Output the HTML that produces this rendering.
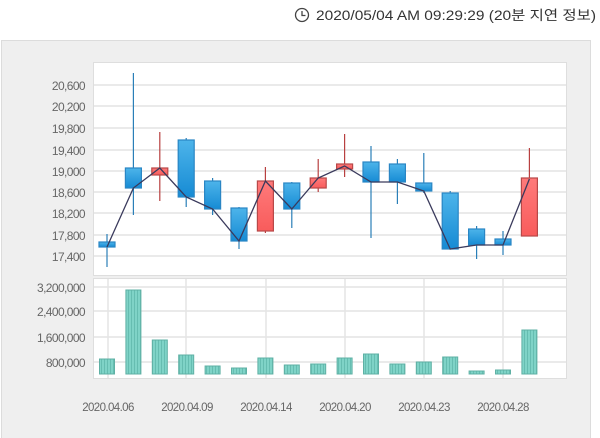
<!DOCTYPE html>
<html><head><meta charset="utf-8"><style>
html,body{margin:0;padding:0;background:#fff;width:600px;height:438px;overflow:hidden}
svg{display:block}
text{font-family:"Liberation Sans","Noto Sans CJK KR",sans-serif}
</style></head><body>
<svg width="600" height="438" viewBox="0 0 600 438" xmlns="http://www.w3.org/2000/svg">
<defs>
<linearGradient id="bl" x1="0" y1="0" x2="0" y2="1"><stop offset="0" stop-color="#4db4ea"/><stop offset="1" stop-color="#168bd4"/></linearGradient>
<linearGradient id="rd" x1="0" y1="0" x2="0" y2="1"><stop offset="0" stop-color="#ff7a7a"/><stop offset="1" stop-color="#f85c5c"/></linearGradient>
<pattern id="vp" width="3" height="4" patternUnits="userSpaceOnUse"><rect width="3" height="4" fill="#7fd3c7"/><rect x="2" width="1" height="4" fill="#66bdb1"/></pattern>
</defs>
<circle cx="302" cy="15" r="6.5" fill="none" stroke="#444" stroke-width="1.3"/>
<path d="M302 11v4.5h3.5" fill="none" stroke="#444" stroke-width="1.3"/>
<text x="316" y="20" font-size="13.5" fill="#333" textLength="280" lengthAdjust="spacingAndGlyphs">2020/05/04 AM 09:29:29 (20분 지연 정보)</text>
<rect x="1.5" y="40.5" width="589" height="400" fill="#efefef" stroke="#dcdcdc"/>
<rect x="93.5" y="62.5" width="473" height="213" fill="#fff" stroke="#dedede"/>
<rect x="93.5" y="278.5" width="473" height="100" fill="#fff" stroke="#dedede"/>
<g stroke="#e4e4e4" stroke-width="1.5">
<line x1="94" x2="566" y1="85" y2="85"/><line x1="94" x2="566" y1="106" y2="106"/><line x1="94" x2="566" y1="128" y2="128"/><line x1="94" x2="566" y1="150" y2="150"/><line x1="94" x2="566" y1="171" y2="171"/><line x1="94" x2="566" y1="192" y2="192"/><line x1="94" x2="566" y1="213" y2="213"/><line x1="94" x2="566" y1="235" y2="235"/><line x1="94" x2="566" y1="256" y2="256"/>
<line x1="94" x2="566" y1="287" y2="287"/><line x1="94" x2="566" y1="311" y2="311"/><line x1="94" x2="566" y1="337" y2="337"/><line x1="94" x2="566" y1="362" y2="362"/>
<line x1="108" x2="108" y1="279" y2="378"/><line x1="186" x2="186" y1="279" y2="378"/><line x1="266" x2="266" y1="279" y2="378"/><line x1="345" x2="345" y1="279" y2="378"/><line x1="424" x2="424" y1="279" y2="378"/><line x1="503" x2="503" y1="279" y2="378"/>
</g>
<g font-size="12" fill="#666" text-anchor="end" letter-spacing="-0.6">
<text x="85" y="90">20,600</text><text x="85" y="111">20,200</text><text x="85" y="133">19,800</text><text x="85" y="155">19,400</text><text x="85" y="176">19,000</text><text x="85" y="197">18,600</text><text x="85" y="218">18,200</text><text x="85" y="240">17,800</text><text x="85" y="261">17,400</text>
<text x="85" y="292">3,200,000</text><text x="85" y="316">2,400,000</text><text x="85" y="342">1,600,000</text><text x="85" y="367">800,000</text>
</g>
<g font-size="11.5" fill="#666" text-anchor="middle" letter-spacing="-0.6">
<text x="108" y="411">2020.04.06</text><text x="187" y="411">2020.04.09</text><text x="266" y="411">2020.04.14</text><text x="345" y="411">2020.04.20</text><text x="424" y="411">2020.04.23</text><text x="503" y="411">2020.04.28</text>
</g>
<g stroke-width="1.2">
<g stroke="#2a7fb8">
<line x1="107" x2="107" y1="234" y2="267"/><line x1="133.4" x2="133.4" y1="73" y2="215"/><line x1="186.2" x2="186.2" y1="138" y2="207"/><line x1="212.6" x2="212.6" y1="178" y2="215"/><line x1="239" x2="239" y1="207" y2="249"/><line x1="291.8" x2="291.8" y1="182" y2="228"/><line x1="371" x2="371" y1="146" y2="238"/><line x1="397.4" x2="397.4" y1="159" y2="204"/><line x1="423.8" x2="423.8" y1="153" y2="193"/><line x1="450.2" x2="450.2" y1="191" y2="249"/><line x1="476.6" x2="476.6" y1="226" y2="259"/><line x1="503" x2="503" y1="231" y2="255"/>
</g>
<g stroke="#b84040">
<line x1="159.8" x2="159.8" y1="132" y2="201"/><line x1="265.4" x2="265.4" y1="167" y2="233"/><line x1="318.2" x2="318.2" y1="159" y2="192"/><line x1="344.6" x2="344.6" y1="134" y2="177"/><line x1="529.4" x2="529.4" y1="148" y2="236"/>
</g>
<g fill="url(#bl)" stroke="#2a86c4">
<rect x="99" y="242" width="16" height="5"/><rect x="125.4" y="168" width="16" height="20"/><rect x="178.2" y="140" width="16" height="57"/><rect x="204.6" y="181" width="16" height="28"/><rect x="231" y="208" width="16" height="33"/><rect x="283.8" y="183" width="16" height="26"/><rect x="363" y="162" width="16" height="20"/><rect x="389.4" y="164" width="16" height="18"/><rect x="415.8" y="183" width="16" height="8"/><rect x="442.2" y="193" width="16" height="56"/><rect x="468.6" y="229" width="16" height="16"/><rect x="495" y="239" width="16" height="6"/>
</g>
<g fill="url(#rd)" stroke="#b84848">
<rect x="151.8" y="168" width="16" height="7"/><rect x="257.4" y="181" width="16" height="50"/><rect x="310.2" y="178" width="16" height="10"/><rect x="336.6" y="164" width="16" height="5"/><rect x="521.4" y="178" width="16" height="58"/>
</g>
</g>
<polyline fill="none" stroke="#3a3a5c" stroke-width="1.3" points="107,247 133.4,188 159.8,168 186.2,197 212.6,209 239,241 265.4,181 291.8,209 318.2,178 344.6,166 371,182 397.4,182 423.8,191 450.2,249 476.6,245 503,245 529.4,179"/>
<g fill="url(#vp)" stroke="#5fb0a4" stroke-width="1">
<rect x="99.5" y="359" width="15" height="15"/><rect x="125.9" y="290" width="15" height="84"/><rect x="152.3" y="340" width="15" height="34"/><rect x="178.7" y="355" width="15" height="19"/><rect x="205.1" y="366" width="15" height="8"/><rect x="231.5" y="368" width="15" height="6"/><rect x="257.9" y="358" width="15" height="16"/><rect x="284.3" y="365" width="15" height="9"/><rect x="310.7" y="364" width="15" height="10"/><rect x="337.1" y="358" width="15" height="16"/><rect x="363.5" y="354" width="15" height="20"/><rect x="389.9" y="364" width="15" height="10"/><rect x="416.3" y="362" width="15" height="12"/><rect x="442.7" y="357" width="15" height="17"/><rect x="469.1" y="371" width="15" height="3"/><rect x="495.5" y="370" width="15" height="4"/><rect x="521.9" y="330" width="15" height="44"/>
</g>
</svg>
</body></html>
